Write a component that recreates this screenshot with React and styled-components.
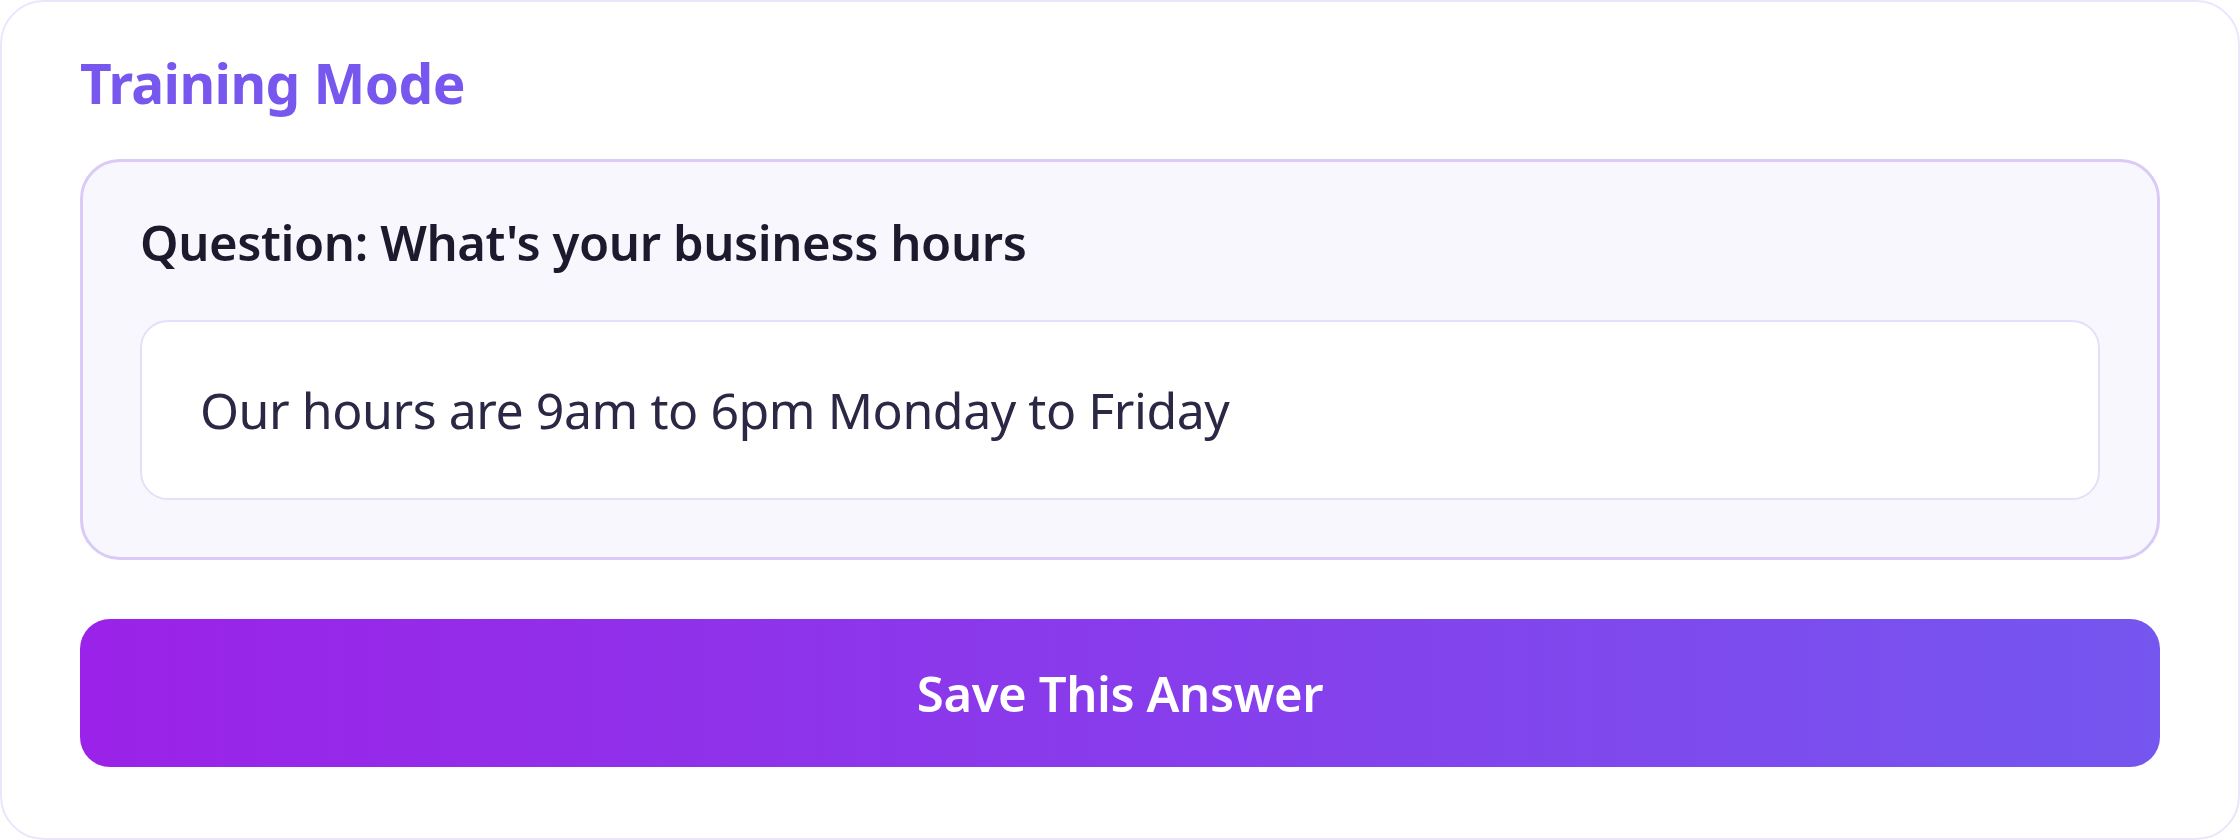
import React from "react";
import styled, { createGlobalStyle } from "styled-components";

const GlobalStyle = createGlobalStyle`
  html, body {
    margin: 0;
    padding: 0;
    background: #ffffff;
  }
  * {
    box-sizing: border-box;
  }
`;

const Card = styled.div`
  width: 2240px;
  height: 840px;
  border: 2px solid #ebe5fb;
  border-radius: 44px;
  background: #ffffff;
  padding: 52px 78px 0 78px;
  display: flex;
  flex-direction: column;
  font-family: "Noto Sans", "Open Sans", sans-serif;
`;

const Title = styled.h1`
  margin: 0;
  font-size: 55px;
  line-height: 57px;
  letter-spacing: -0.6px;
  font-weight: 700;
  color: #7757ee;
`;

const Panel = styled.section`
  margin-top: 48px;
  border: 3px solid #d9caf6;
  border-radius: 40px;
  background: #f9f7fe;
  padding: 55px 57px 57px 57px;
  display: flex;
  flex-direction: column;
  gap: 52px;
`;

const Question = styled.h2`
  margin: 0;
  font-size: 49px;
  line-height: 51px;
  letter-spacing: -0.4px;
  font-weight: 600;
  color: #1e1a2d;
`;

const AnswerBox = styled.div`
  height: 180px;
  border: 2px solid #e6dffa;
  border-radius: 28px;
  background: #ffffff;
  padding: 0 58px;
  display: flex;
  align-items: center;
  font-size: 50px;
  line-height: 51px;
  letter-spacing: -0.45px;
  font-weight: 400;
  color: #2b2845;
`;

const SaveButton = styled.button`
  margin-top: 59px;
  height: 148px;
  border: none;
  border-radius: 30px;
  background: linear-gradient(90deg, #9b22e8 0%, #7556ef 100%);
  color: #ffffff;
  font-family: inherit;
  font-size: 49px;
  letter-spacing: -0.4px;
  font-weight: 600;
  cursor: pointer;
`;

export default function App() {
  return (
    <>
      <GlobalStyle />
      <Card>
        <Title>Training Mode</Title>
        <Panel>
          <Question>Question: What's your business hours</Question>
          <AnswerBox>Our hours are 9am to 6pm Monday to Friday</AnswerBox>
        </Panel>
        <SaveButton>Save This Answer</SaveButton>
      </Card>
    </>
  );
}
